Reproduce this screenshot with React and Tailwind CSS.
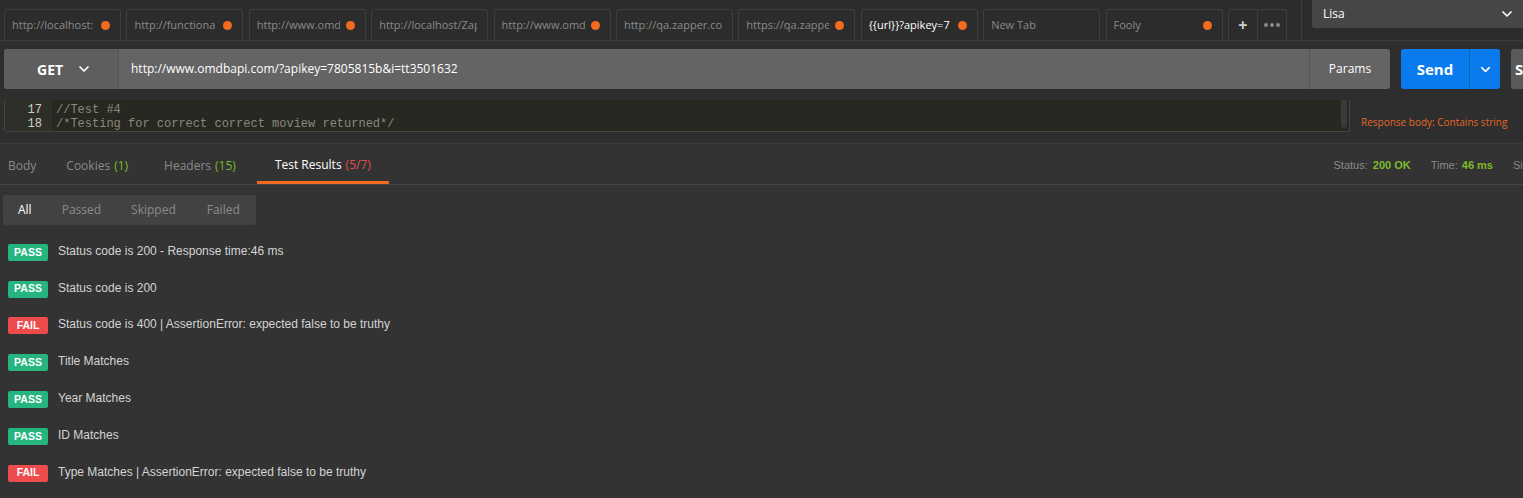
import { ChevronDown } from 'lucide-react';

const tabs = [
  { label: 'http://localhost:', dot: true },
  { label: 'http://functiona', dot: true },
  { label: 'http://www.omdb', dot: true },
  { label: 'http://localhost/Zapper', dot: false },
  { label: 'http://www.omdb', dot: true },
  { label: 'http://qa.zapper.com/', dot: false },
  { label: 'https://qa.zapper', dot: true },
  { label: '{{url}}?apikey=7', dot: true, active: true },
  { label: 'New Tab', dot: false },
  { label: 'Fooly', dot: true },
];

const results = [
  { pass: true, text: 'Status code is 200 - Response time:46 ms' },
  { pass: true, text: 'Status code is 200' },
  { pass: false, text: 'Status code is 400 | AssertionError: expected false to be truthy' },
  { pass: true, text: 'Title Matches' },
  { pass: true, text: 'Year Matches' },
  { pass: true, text: 'ID Matches' },
  { pass: false, text: 'Type Matches | AssertionError: expected false to be truthy' },
];

function Tab({ label, dot, active }) {
  return (
    <div className="w-[117px] h-[31px] shrink-0 border border-b-0 border-[#3e3e3e] rounded-t-[3px] flex items-center pl-[7px] pr-[10px] gap-[6px]">
      <span className={`flex-1 overflow-hidden whitespace-nowrap text-[11px] ${active ? 'text-white' : 'text-[#8a8a8a]'}`}>
        {label}
      </span>
      {dot && <span className="w-[9px] h-[9px] rounded-full bg-[#f26b21] shrink-0" />}
    </div>
  );
}

export default function App() {
  return (
    <div className="w-[1523px] h-[498px] overflow-hidden bg-[#333333] font-['Open_Sans',sans-serif]">
      {/* Tab strip */}
      <div className="h-[41px] bg-[#2c2c2c] border-b border-[#3c3c3c] flex">
        <div className="flex gap-[5.4px] pl-[4px] pt-[9px]">
          {tabs.map((t, i) => (
            <Tab key={i} {...t} />
          ))}
          <div className="w-[59px] h-[31px] shrink-0 border border-b-0 border-[#3e3e3e] rounded-t-[3px] flex">
            <div className="w-[29px] flex items-center justify-center text-[#cfcfcf] text-[16px] font-bold border-r border-[#3e3e3e]">+</div>
            <div className="flex-1 flex items-center justify-center gap-[2px]">
              <span className="w-[4px] h-[4px] rounded-full bg-[#8a8a8a]" />
              <span className="w-[4px] h-[4px] rounded-full bg-[#8a8a8a]" />
              <span className="w-[4px] h-[4px] rounded-full bg-[#8a8a8a]" />
            </div>
          </div>
        </div>
        <div className="ml-[14px] w-px bg-[#3e3e3e]" />
        <div className="ml-[10px] flex-1 h-[28px] bg-[#464646] rounded-bl-[3px] flex items-center justify-between pl-[11px] pr-[8px]">
          <span className="text-[12px] text-white">Lisa</span>
          <ChevronDown size={16} strokeWidth={2.5} className="text-white" />
        </div>
      </div>

      {/* Request section */}
      <div className="h-[103px] bg-[#2e2e2e] border-b border-[#3c3c3c] flex flex-col">
        <div className="flex items-center mt-[8px] pl-[4px] h-[40px]">
          <div className="w-[1386px] shrink-0 h-[40px] bg-[#646464] rounded-[3px] flex">
            <div className="w-[115px] bg-[#5e5e5e] rounded-l-[3px] border-r border-[#555] flex items-center pl-[33px] gap-[13px]">
              <span className="text-[14px] font-bold text-white">GET</span>
              <ChevronDown size={16} strokeWidth={2.5} className="text-white" />
            </div>
            <div className="flex-1 flex items-center pl-[12px] text-[12px] text-white">
              http://www.omdbapi.com/?apikey=7805815b&amp;i=tt3501632
            </div>
            <div className="w-[81px] border-l border-[#555] flex items-center justify-center text-[12px] text-white">
              Params
            </div>
          </div>
          <div className="ml-[11px] w-[99px] shrink-0 h-[40px] bg-[#097bed] rounded-[3px] flex">
            <div className="w-[69px] flex items-center justify-center text-[15px] font-bold text-white border-r border-[#0a62bb]">
              Send
            </div>
            <div className="flex-1 flex items-center justify-center">
              <ChevronDown size={15} strokeWidth={2.5} className="text-white" />
            </div>
          </div>
          <div className="ml-[11px] flex-1 h-[40px] bg-[#5a5a5a] rounded-l-[3px] flex items-center pl-[4px] text-[15px] font-bold text-white overflow-hidden">
            S
          </div>
        </div>
        <div className="flex mt-[11px]">
          <div className="ml-[4px] w-[1346px] shrink-0 h-[32px] bg-[#272822] border border-t-0 border-[#444] rounded-b-[3px] flex overflow-hidden font-['Liberation_Mono',monospace] text-[12px] leading-[14px]">
            <div className="w-[47px] bg-[#2f2f2a] flex flex-col items-end pr-[10px] pt-[3px] text-[#cfcfc2]">
              <span>17</span>
              <span>18</span>
            </div>
            <div className="flex-1 flex flex-col pl-[4px] pt-[3px] text-[#8a8878]">
              <span>//Test #4</span>
              <span>/*Testing for correct correct moview returned*/</span>
            </div>
            <div className="w-[6px] mr-[2px] h-[28px] bg-[#3a3a36] rounded-b-[3px]" />
          </div>
          <div className="ml-[11px] pt-[15px] text-[10px] text-[#e0682a] whitespace-nowrap">
            Response body: Contains string
          </div>
        </div>
      </div>

      {/* Response tabs */}
      <div className="h-[41px] border-b border-[#444] flex items-end justify-between">
        <div className="flex text-[12px] h-full">
          <div className="pl-[8px] pr-[15px] flex items-center pt-[4px] text-[#8a8a8a]">Body</div>
          <div className="px-[15px] flex items-center pt-[4px] text-[#8a8a8a] gap-[4px]">
            Cookies <span className="text-[#7fba2c]">(1)</span>
          </div>
          <div className="ml-[6px] px-[15px] flex items-center pt-[4px] text-[#8a8a8a] gap-[4px]">
            Headers <span className="text-[#7fba2c]">(15)</span>
          </div>
          <div className="ml-[6px] w-[132px] flex items-center justify-center text-white gap-[4px] border-b-[3px] border-[#f26b21] pt-[4px]">
            Test Results <span className="text-[#e04f4f]">(5/7)</span>
          </div>
        </div>
        <div className="h-full flex items-center pt-[3px] text-[11px] font-['Liberation_Sans',sans-serif] whitespace-nowrap">
          <span className="text-[#8a8a8a]">Status:</span>
          <span className="ml-[5px] text-[#7fba2c] font-bold">200 OK</span>
          <span className="ml-[20px] text-[#8a8a8a]">Time:</span>
          <span className="ml-[4px] text-[#7fba2c] font-bold">46 ms</span>
          <span className="ml-[20px] w-[10px] overflow-hidden text-[#8a8a8a]">Si</span>
        </div>
      </div>

      {/* Filters */}
      <div className="pl-[3px] pt-[10px]">
        <div className="w-[253px] h-[30px] bg-[#424242] rounded-[3px] flex items-center text-[12px] text-[#8a8a8a]">
          <span className="ml-[15px] text-white">All</span>
          <span className="ml-[30px]">Passed</span>
          <span className="ml-[30px]">Skipped</span>
          <span className="ml-[31px]">Failed</span>
        </div>
      </div>

      {/* Results */}
      <div className="pt-[9px] flex flex-col font-['Liberation_Sans',Arial,sans-serif]">
        {results.map((r, i) => (
          <div key={i} className="h-[36.8px] flex items-center pl-[8px]">
            <span
              className={`w-[40px] h-[17px] rounded-[2px] flex items-center justify-center text-[10.5px] font-bold text-white ${
                r.pass ? 'bg-[#26b47f]' : 'bg-[#ee4c4c]'
              }`}
            >
              {r.pass ? 'PASS' : 'FAIL'}
            </span>
            <span className="ml-[10px] -mt-[3px] text-[12px] text-[#d4d4d4]">{r.text}</span>
          </div>
        ))}
      </div>
    </div>
  );
}
